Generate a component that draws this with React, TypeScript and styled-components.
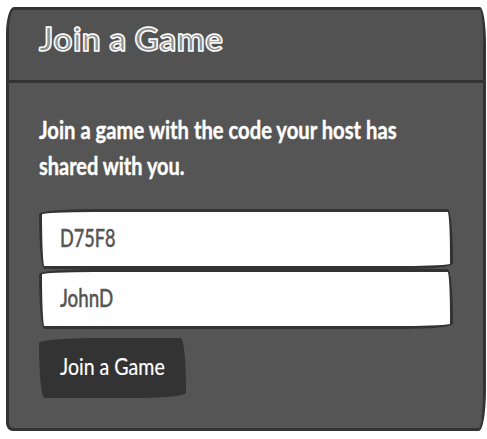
import React, { useState } from "react";
import styled, { createGlobalStyle } from "styled-components";

const GlobalStyle = createGlobalStyle`
  *, *::before, *::after { box-sizing: border-box; }
  body {
    margin: 0;
    background: #fff;
    font-family: Lato, "Open Sans", sans-serif;
    overflow: hidden;
  }
`;

const Page = styled.main`
  padding: 7px 1px 8px 6px;
`;

const Card = styled.section`
  height: 424px;
  display: flex;
  flex-direction: column;
  overflow: hidden;
  color: #fff;
  background: #555;
  border: 3px solid #333;
  border-radius: 8px 6px 7px 7px / 27px 38px 42px 8px;
`;

const CardHeader = styled.header`
  height: 73px;
  flex: none;
  padding: 3px 30px 0;
  background: #525252;
  border-bottom: 3px solid #333;
`;

const Title = styled.h4`
  margin: 0;
  width: max-content;
  font: 700 33px/50px Lato, sans-serif;
  color: #909090;
  -webkit-text-stroke: 1.5px #fff;
  letter-spacing: 0.4px;
  word-spacing: -0.5px;
  transform: scaleX(1.015);
  transform-origin: left;
`;

const CardBody = styled.form`
  padding: 30px 30px 0;
`;

const Lead = styled.p`
  margin: -1px 0 25px;
  font-weight: 700;
  font-size: 24px;
  line-height: 36px;
  -webkit-text-stroke: 0.4px #fff;
`;

const Line = styled.span<{ $stretch: number }>`
  display: block;
  width: max-content;
  white-space: nowrap;
  transform: scaleX(${(p) => p.$stretch});
  transform-origin: left;
`;

const sketchEdge = `
  border: 3px solid #333;
  border-radius: 255px 25px 225px 25px / 25px 225px 25px 255px;
`;

const Field = styled.label`
  display: block;
  height: 60px;
  overflow: hidden;
  background: #fff;
  ${sketchEdge}
`;

const Input = styled.input<{ $stretch: number }>`
  display: block;
  width: 360px;
  height: 52px;
  margin-left: 18px;
  padding: 0;
  border: 0;
  outline: 0;
  background: transparent;
  color: #555;
  font: 500 24px/52px Lato, sans-serif;
  -webkit-text-stroke: 0.4px #555;
  transform: scaleX(${(p) => p.$stretch});
  transform-origin: left;
`;

const Button = styled.button`
  display: block;
  width: 147px;
  height: 60px;
  margin-top: 9px;
  padding: 0 0 4px 18px;
  color: #fff;
  background: #333;
  font: 400 24px/36px Lato, sans-serif;
  -webkit-text-stroke: 0.2px #fff;
  ${sketchEdge}
`;

export default function App() {
  const [code, setCode] = useState("D75F8");
  const [name, setName] = useState("JohnD");
  return (
    <>
      <GlobalStyle />
      <Page>
        <Card>
          <CardHeader>
            <Title>Join a Game</Title>
          </CardHeader>
          <CardBody onSubmit={(e) => e.preventDefault()}>
            <Lead>
              <Line $stretch={0.842}>Join a game with the code your host has</Line>
              <Line $stretch={0.832}>shared with you.</Line>
            </Lead>
            <Field>
              <Input $stretch={0.755} aria-label="Game code" value={code} onChange={(e) => setCode(e.target.value)} />
            </Field>
            <Field>
              <Input $stretch={0.78} aria-label="Player name" value={name} onChange={(e) => setName(e.target.value)} />
            </Field>
            <Button type="submit">
              <Line $stretch={0.815}>Join a Game</Line>
            </Button>
          </CardBody>
        </Card>
      </Page>
    </>
  );
}
